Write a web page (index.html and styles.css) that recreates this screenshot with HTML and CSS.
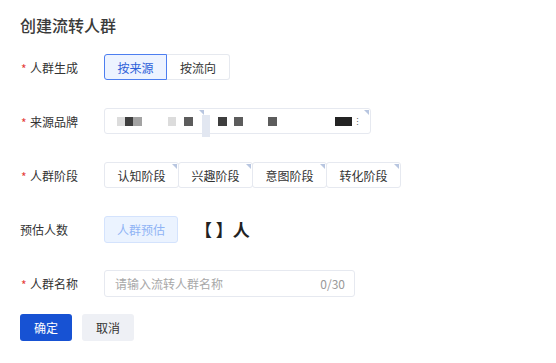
FILE: index.html
```html
<!DOCTYPE html>
<html lang="zh-CN">
<head>
    <meta charset="UTF-8">
    <meta name="viewport" content="width=device-width, initial-scale=1.0">
    <title>创建流转人群</title>
    <link rel="stylesheet" href="styles.css">
</head>
<body>

<main class="page">
    <h1 class="title">创建流转人群</h1>

    <div class="form-row">
        <label class="form-label required">人群生成</label>
        <div class="radio-group">
            <button class="radio-btn active">按来源</button>
            <button class="radio-btn">按流向</button>
        </div>
    </div>

    <div class="form-row">
        <label class="form-label required">来源品牌</label>
        <div class="brand-box">
            <span class="blk w8 light ml13"></span>
            <span class="blk w8 dark"></span>
            <span class="blk w9 mid"></span>
            <span class="blk w8 light ml26"></span>
            <span class="blk w9 dim ml8"></span>
            <span class="brand-bar ml9"></span>
            <span class="blk w9 dark ml8"></span>
            <span class="blk w9 dim ml7"></span>
            <span class="blk w9 dim ml25"></span>
            <span class="blk w17 black ml58"></span>
            <span class="more">⋮</span>
            <span class="corner at-first"></span>
            <span class="corner at-end"></span>
        </div>
    </div>

    <div class="form-row">
        <label class="form-label required">人群阶段</label>
        <div class="stage-group">
            <span class="stage">认知阶段</span>
            <span class="stage">兴趣阶段</span>
            <span class="stage">意图阶段</span>
            <span class="stage">转化阶段</span>
        </div>
    </div>

    <div class="form-row">
        <label class="form-label">预估人数</label>
        <button class="estimate-btn">人群预估</button>
        <span class="estimate-result">【 】人</span>
    </div>

    <div class="form-row">
        <label class="form-label required">人群名称</label>
        <div class="text-input">
            <input type="text" placeholder="请输入流转人群名称">
            <span class="counter">0/30</span>
        </div>
    </div>

    <div class="actions">
        <button class="btn primary">确定</button>
        <button class="btn">取消</button>
    </div>
</main>

</body>
</html>
```

FILE: styles.css
```css
body {
    margin: 0;
    padding: 0;
    background-color: #fff;
    font-family: "Noto Sans CJK SC", "Noto Sans", sans-serif;
    color: #333;
}

.page {
    padding: 14px 20px 0;
}

.title {
    margin: 0 0 17px;
    font-size: 16px;
    line-height: 22px;
    font-weight: 500;
    color: #3a3a3a;
}

.form-row {
    display: flex;
    align-items: center;
    height: 28px;
    margin-bottom: 26px;
}

.form-label {
    width: 84px;
    flex-shrink: 0;
    font-size: 12px;
    color: #333;
    box-sizing: border-box;
    position: relative;
}

.form-label.required {
    padding-left: 10px;
}

.form-label.required::before {
    content: "*";
    position: absolute;
    left: 1px;
    top: 1px;
    color: #e5403a;
    font-size: 12px;
}

/* radio buttons */
.radio-group {
    display: flex;
}

.radio-btn {
    width: 63px;
    height: 26px;
    font-family: inherit;
    font-size: 12px;
    color: #333;
    background-color: #fff;
    border: 1px solid #e6e9ef;
    border-radius: 3px;
    padding: 0;
}

.radio-btn.active {
    color: #2c5fd9;
    background-color: #edf3ff;
    border-color: #4d7ef0;
    border-radius: 3px 0 0 3px;
}

.radio-btn + .radio-btn {
    border-left: none;
    border-radius: 0 3px 3px 0;
}

/* brand mosaic */
.brand-box {
    position: relative;
    display: flex;
    align-items: center;
    width: 267px;
    height: 26px;
    border: 1px solid #e6e9f0;
    border-radius: 3px;
    box-sizing: border-box;
}

.blk {
    height: 9px;
    flex-shrink: 0;
}

.w8 { width: 8px; }
.w9 { width: 9px; }
.w17 { width: 17px; }

.light { background-color: #dcdcdc; }
.mid { background-color: #a3a3a3; }
.dim { background-color: #5c5c5c; }
.dark { background-color: #3e3e3e; }
.black { background-color: #232323; }

.ml7 { margin-left: 7px; }
.ml8 { margin-left: 8px; }
.ml9 { margin-left: 9px; }
.ml13 { margin-left: 12px; }
.ml25 { margin-left: 25px; }
.ml26 { margin-left: 26px; }
.ml58 { margin-left: 58px; }

.brand-bar {
    width: 8px;
    height: 22px;
    background-color: #e2e7f1;
    transform: translateY(5px);
    flex-shrink: 0;
}

.more {
    font-size: 9px;
    color: #666;
    margin-left: 1px;
    line-height: 1;
}

.corner {
    position: absolute;
    top: 1px;
    width: 0;
    height: 0;
    border-top: 5px solid #b8c6e0;
    border-left: 5px solid transparent;
}

.corner.at-first { left: 94px; }
.corner.at-end { right: 1px; }

/* stages */
.stage-group {
    display: flex;
}

.stage {
    position: relative;
    width: 75px;
    height: 26px;
    line-height: 26px;
    text-align: center;
    font-size: 12px;
    color: #333;
    border: 1px solid #e6e9f0;
    border-radius: 3px;
    box-sizing: border-box;
    margin-right: -1px;
}

.stage::after {
    content: "";
    position: absolute;
    top: 1px;
    right: 1px;
    border-top: 5px solid #b8c6e0;
    border-left: 5px solid transparent;
}

/* estimate */
.estimate-btn {
    width: 74px;
    height: 27px;
    padding: 0;
    font-family: inherit;
    font-size: 12px;
    color: #90b4f5;
    background-color: #ebf3ff;
    border: 1px solid #d4e3fd;
    border-radius: 3px;
}

.estimate-result {
    margin-left: 17px;
    font-size: 17px;
    font-weight: 700;
    color: #222;
}

/* name input */
.text-input {
    display: flex;
    align-items: center;
    width: 251px;
    height: 27px;
    border: 1px solid #e6e9f0;
    border-radius: 3px;
    box-sizing: border-box;
    padding: 0 9px 0 10px;
}

.text-input input {
    flex: 1;
    min-width: 0;
    border: none;
    outline: none;
    padding: 0;
    font-family: inherit;
    font-size: 12px;
    color: #333;
}

.text-input input::placeholder {
    color: #a8a8a8;
}

.counter {
    font-size: 12px;
    color: #999;
}

/* actions */
.actions {
    display: flex;
    gap: 10px;
    margin-top: -9px;
}

.btn {
    width: 52px;
    height: 27px;
    padding: 0;
    font-family: inherit;
    font-size: 12px;
    color: #333;
    background-color: #eef0f5;
    border: none;
    border-radius: 3px;
}

.btn.primary {
    color: #fff;
    background-color: #1752d3;
}
```
